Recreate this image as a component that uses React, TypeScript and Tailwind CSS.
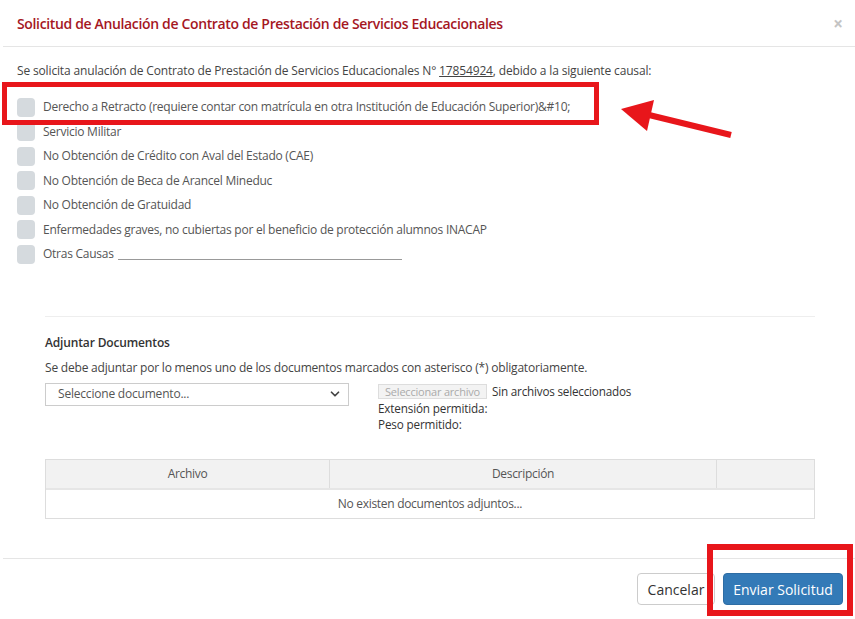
import { ChevronDown } from "lucide-react";

const causales = [
  "Derecho a Retracto (requiere contar con matrícula en otra Institución de Educación Superior)&#10;",
  "Servicio Militar",
  "No Obtención de Crédito con Aval del Estado (CAE)",
  "No Obtención de Beca de Arancel Mineduc",
  "No Obtención de Gratuidad",
  "Enfermedades graves, no cubiertas por el beneficio de protección alumnos INACAP",
];

function Check() {
  return <span className="h-[19px] w-[18px] shrink-0 rounded-[4px] bg-[#d5dade]" />;
}

export default function App() {
  return (
    <div className="relative h-[619px] w-[855px] overflow-hidden bg-white font-['Open_Sans',sans-serif] text-[#555]">
      {/* header */}
      <div className="ml-[3px] flex h-[47px] items-center justify-between border-b border-[#e5e5e5] pl-[14px] pr-[12px]">
        <h1 className="text-[14px] font-semibold tracking-[-0.35px] text-[#a5171f]">
          Solicitud de Anulación de Contrato de Prestación de Servicios Educacionales
        </h1>
        <span className="text-[17px] font-bold leading-none text-[#c4c4c4]">×</span>
      </div>

      {/* body */}
      <div className="px-[17px] pt-[15px]">
        <p className="text-[12px] leading-[18px] tracking-[-0.15px] text-[#444]">
          Se solicita anulación de Contrato de Prestación de Servicios Educacionales N°{" "}
          <span className="underline">17854924</span>, debido a la siguiente causal:
        </p>

        <ul className="mt-[15px] flex flex-col text-[12px] tracking-[-0.25px]">
          {causales.map((c) => (
            <li key={c} className="flex h-[24.5px] items-center gap-[8px]">
              <Check />
              <span>{c}</span>
            </li>
          ))}
          <li className="flex h-[24.5px] items-center gap-[8px]">
            <Check />
            <span className="flex items-center gap-[4px]">
              Otras Causas
              <span className="mt-[10px] h-px w-[284px] bg-[#999]" />
            </span>
          </li>
        </ul>
      </div>

      {/* adjuntos */}
      <div className="ml-[45px] mr-[40px] mt-[49px] border-t border-[#eee] pt-[17px] text-[12px] text-[#333]">
        <h2 className="text-[12px] font-semibold tracking-[-0.15px]">Adjuntar Documentos</h2>
        <p className="mt-[7px] tracking-[-0.2px] text-[#444]">
          Se debe adjuntar por lo menos uno de los documentos marcados con asterisco (*) obligatoriamente.
        </p>
        <div className="mt-[6px] flex items-start gap-[29px]">
          <div className="flex h-[23px] w-[304px] items-center justify-between border border-[#ccc] pl-[12px] pr-[6px] tracking-[-0.2px] text-[#555]">
            <span>Seleccione documento...</span>
            <ChevronDown className="h-[14px] w-[14px] text-[#444]" strokeWidth={3} />
          </div>
          <div className="pt-px text-[11.7px] text-[#333]">
            <div className="flex h-[16px] items-center gap-[5px]">
              <span className="border border-[#ddd] bg-[#f3f3f3] px-[6px] text-[11px] leading-[13px] tracking-[-0.2px] text-[#aaa]">
                Seleccionar archivo
              </span>
              <span className="tracking-[-0.2px]">Sin archivos seleccionados</span>
            </div>
            <div className="h-[16px] leading-[16px] tracking-[-0.15px]">Extensión permitida:</div>
            <div className="h-[16px] leading-[16px] tracking-[-0.15px]">Peso permitido:</div>
          </div>
        </div>

        <div className="mt-[27px] border border-[#ddd]">
          <div className="grid h-[30px] grid-cols-[284px_387px_1fr] border-b-2 border-[#e6e6e6] bg-[#f2f2f2] tracking-[-0.3px] text-[#555]">
            <div className="flex items-center justify-center border-r border-[#ddd]">Archivo</div>
            <div className="flex items-center justify-center border-r border-[#ddd]">Descripción</div>
            <div />
          </div>
          <div className="flex h-[28px] items-center justify-center tracking-[-0.3px] text-[#555]">
            No existen documentos adjuntos...
          </div>
        </div>
      </div>

      {/* footer */}
      <div className="absolute inset-x-0 top-[558px] ml-[3px] flex justify-end gap-[8px] border-t border-[#e5e5e5] pr-[12px] pt-[14px]">
        <button type="button" className="h-[32px] w-[78px] rounded-[4px] border border-[#ccc] bg-white text-[14px] text-[#333]">
          Cancelar
        </button>
        <button type="button" className="h-[32px] w-[120px] rounded-[4px] border border-[#2e6da4] bg-[#337ab7] text-[14px] text-white">
          Enviar Solicitud
        </button>
      </div>

      {/* anotaciones */}
      <div className="pointer-events-none absolute left-[2px] top-[82px] h-[43px] w-[597px] border-[5px] border-[#e8161b]" />
      <div className="pointer-events-none absolute left-[707px] top-[544px] h-[72px] w-[146px] border-[6px] border-[#e8161b]" />
      <svg className="pointer-events-none absolute left-0 top-0" width="855" height="619">
        <line x1="731" y1="135" x2="645" y2="114" stroke="#e8161b" strokeWidth="6" />
        <polygon points="621,109 654,100 647,131" fill="#e8161b" />
      </svg>
    </div>
  );
}
